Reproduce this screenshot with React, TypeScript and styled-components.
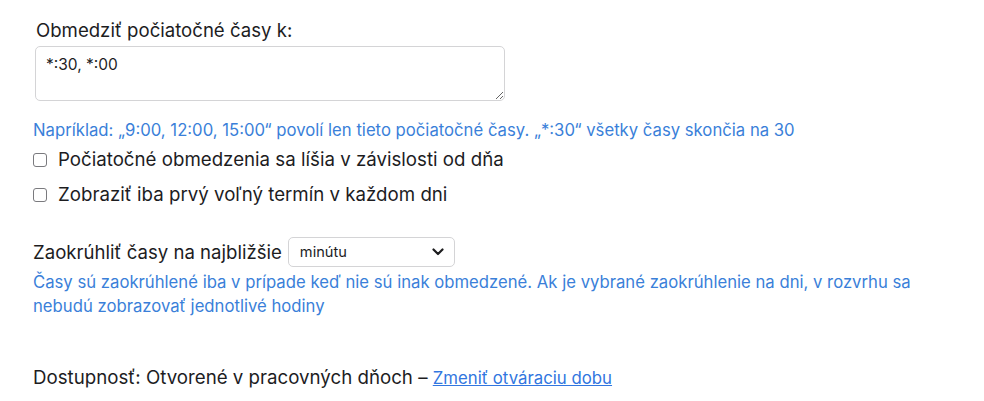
import * as React from 'react'
import styled, { createGlobalStyle } from 'styled-components'

const GlobalStyle = createGlobalStyle`
    body {
        margin: 0;
        background: #ffffff;
        font-family: Inter, 'Liberation Sans', sans-serif;
        color: #1d1d1f;
    }
`

const Page = styled.div`
    padding: 19px 0 0 33px;
    width: 920px;
`

const Title = styled.label`
    display: block;
    margin-left: 3px;
    font-size: 18.6px;
    line-height: 22px;
    color: #1d1d1f;
`

const TextArea = styled.textarea`
    display: block;
    box-sizing: border-box;
    margin: 5px 0 0 2px;
    width: 470px;
    height: 55px;
    padding: 8px 10px;
    border: 1px solid #d4d4d6;
    border-radius: 5px;
    font-family: Inter, 'Liberation Sans', sans-serif;
    font-size: 15.5px;
    line-height: 20px;
    color: #1d1d1f;
    resize: vertical;
    outline: none;
`

const Help = styled.div<{ $top?: number }>`
    margin-top: ${({ $top }) => $top ?? 0}px;
    font-size: 16.7px;
    line-height: 24px;
    color: #3a7fd9;
    white-space: nowrap;
`

const CheckRow = styled.label<{ $top?: number }>`
    display: flex;
    align-items: center;
    gap: 11px;
    margin-top: ${({ $top }) => $top ?? 0}px;
    font-size: 18.7px;
    line-height: 24px;
    color: #1d1d1f;
`

const Box = styled.span`
    box-sizing: border-box;
    width: 14px;
    height: 14px;
    border: 1px solid #7a7a7e;
    border-radius: 3px;
    background: #fff;
    flex: none;
`

const SelectRow = styled.div`
    display: flex;
    align-items: center;
    gap: 6px;
    margin-top: 30px;
    font-size: 18.6px;
    line-height: 24px;
`

const Select = styled.div`
    box-sizing: border-box;
    width: 167px;
    height: 30px;
    display: flex;
    align-items: center;
    justify-content: space-between;
    padding: 0 10px 0 11px;
    border: 1px solid #d4d4d6;
    border-radius: 5px;
    font-size: 14.6px;
    color: #1d1d1f;
`

const Availability = styled.div`
    margin-top: 48px;
    font-size: 18.7px;
    line-height: 24px;
    color: #1d1d1f;
`

const Link = styled.a`
    font-size: 16.8px;
    color: #3176e0;
    text-decoration: underline;
`

const Chevron = () => (
    <svg width="12" height="8" viewBox="0 0 12 8" fill="none">
        <path d="M1.5 1.5 L6 6 L10.5 1.5" stroke="#1d1d1f" strokeWidth="2.2" strokeLinecap="round" strokeLinejoin="round" />
    </svg>
)

export default function App() {
    return (
        <Page>
            <GlobalStyle />
            <Title>Obmedziť počiatočné časy k:</Title>
            <TextArea defaultValue="*:30, *:00" />
            <Help $top={17}>
                Napríklad: „9:00, 12:00, 15:00“ povolí len tieto počiatočné časy. „*:30“ všetky časy skončia na 30
            </Help>
            <CheckRow $top={6}>
                <Box />
                Počiatočné obmedzenia sa líšia v závislosti od dňa
            </CheckRow>
            <CheckRow $top={11}>
                <Box />
                Zobraziť iba prvý voľný termín v každom dni
            </CheckRow>
            <SelectRow>
                Zaokrúhliť časy na najbližšie
                <Select>
                    <span>minútu</span>
                    <Chevron />
                </Select>
            </SelectRow>
            <Help $top={3}>
                Časy sú zaokrúhlené iba v prípade keď nie sú inak obmedzené. Ak je vybrané zaokrúhlenie na dni, v rozvrhu sa
                <br />
                nebudú zobrazovať jednotlivé hodiny
            </Help>
            <Availability>
                Dostupnosť: Otvorené v pracovných dňoch – <Link href="#">Zmeniť otváraciu dobu</Link>
            </Availability>
        </Page>
    )
}
